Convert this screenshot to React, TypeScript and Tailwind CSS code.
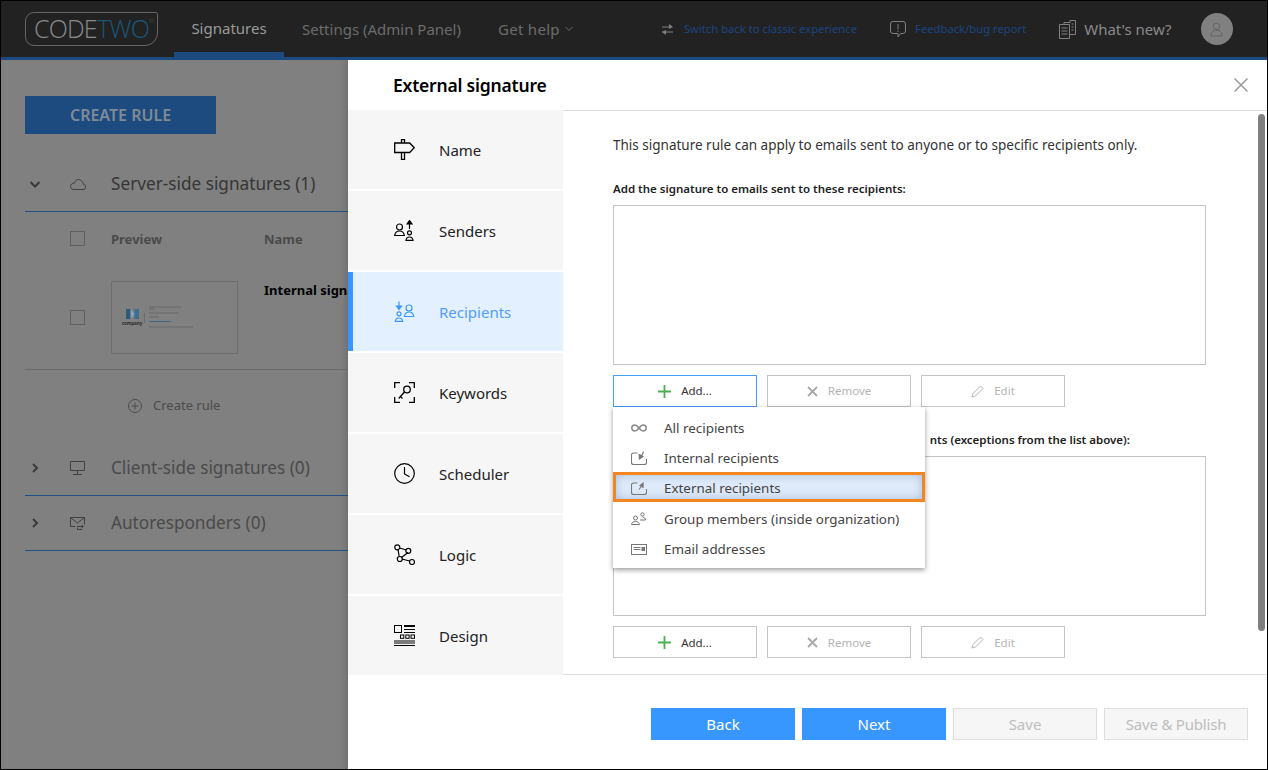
import type { ReactNode } from "react";

const Sign = () => (
  <svg width="21" height="21" viewBox="0 0 21 21" fill="none" stroke="currentColor" strokeWidth="1.3">
    <path d="M7.5 4V.7h3V4M7.5 13.5v7h3v-7M.7 4h15l4.5 4.7-4.5 4.8H.7z" />
  </svg>
);

const PeopleUp = () => (
  <svg width="21" height="21" viewBox="0 0 21 21" fill="none" stroke="currentColor" strokeWidth="1.2">
    <circle cx="5.5" cy="7" r="3" />
    <path d="M.7 15.5c.4-3 2.2-4.5 4.8-4.5s4.400 1.500 4.800 4.500z" />
    <circle cx="15.500" cy="12.800" r="2" />
    <path d="M12 20.300c.2-2.300 1.500-3.300 3.500-3.300s3.300 1 3.500 3.300zM15.500 9V3" />
    <path d="M13 4l2.500-3.500L18 4z" fill="currentColor" />
  </svg>
);

const PeopleDown = () => (
  <svg width="21" height="21" viewBox="0 0 21 21" fill="none" stroke="currentColor" strokeWidth="1.2">
    <circle cx="15" cy="7" r="3" />
    <path d="M10.500 15.500c.4-3 2.200-4.500 4.500-4.500s4.400 1.500 4.800 4.500z" />
    <circle cx="5" cy="12.800" r="2" />
    <path d="M1.300 20.300c.2-2.300 1.600-3.300 3.700-3.300s3.400 1 3.700 3.300zM5 .5v5" />
    <path d="M2.500 5L5 8.500 7.500 5z" fill="currentColor" />
  </svg>
);

const KeyIcon = () => (
  <svg width="21" height="21" viewBox="0 0 21 21" fill="none" stroke="currentColor" strokeWidth="1.3">
    <path d="M.7 6V.7H6M15 .7h5.300V6M.7 15v5.300H6M15 20.300h5.300V15" />
    <circle cx="13" cy="7.500" r="3.300" />
    <path d="M10.500 10l-5.800 6.500M6.500 14.500l2 2" />
  </svg>
);

const ClockIcon = () => (
  <svg width="21" height="21" viewBox="0 0 21 21" fill="none" stroke="currentColor" strokeWidth="1.2">
    <circle cx="10.500" cy="10.500" r="9.800" />
    <path d="M10.500 4v7l5 2.800" />
  </svg>
);

const LogicIcon = () => (
  <svg width="21" height="21" viewBox="0 0 21 21" fill="none" stroke="currentColor" strokeWidth="1.2">
    <path d="M5.500 4l7 2M4 5.500l1.200 7M14 8.500l-6.500 5M8 15l7.500 2" />
    <circle cx="3.300" cy="3.300" r="2.500" />
    <circle cx="14.300" cy="6.800" r="2.500" />
    <circle cx="5.800" cy="15" r="2.500" />
    <circle cx="18" cy="18" r="2.500" />
  </svg>
);

const DesignIcon = () => (
  <svg width="21" height="21" viewBox="0 0 21 21" fill="none" stroke="currentColor" strokeWidth="1">
    <rect x=".5" y=".5" width="7" height="7" />
    <path d="M10 1h11" strokeWidth="2" />
    <path d="M10 4.500h11M10 7.500h11" />
    <rect x="6.500" y="10" width="3.300" height="3.300" />
    <rect x="11.800" y="10" width="3.300" height="3.300" />
    <rect x="17" y="10" width="3.500" height="3.300" />
    <path d="M0 16h21M0 20.500h21M0 18h21" />
  </svg>
);

const InfinityIcon = () => (
  <svg width="16" height="8" viewBox="0 0 16 8" fill="none" stroke="#888888" strokeWidth="1.500">
    <path d="M8 4C6.500 2 5.500 1 3.800 1a3 3 0 000 6C5.500 7 6.500 6 8 4zm0 0c1.500-2 2.500-3 4.200-3a3 3 0 010 6C10.500 7 9.500 6 8 4z" />
  </svg>
);

const BoxArrow = ({ out }: { out?: boolean }) => (
  <svg width="16" height="14" viewBox="0 0 16 14" fill="none" stroke="currentColor" strokeWidth="1.100">
    <path d="M6.500 2H2.500a2 2 0 00-2 2v7.500a2 2 0 002 2h11a2 2 0 002-2V8" />
    {out ? (
      <>
        <path d="M8 8.500l3-4" />
        <path d="M12.800 1L8 4.500l4.500 2.800z" fill="currentColor" stroke="none" />
      </>
    ) : (
      <>
        <path d="M12.500.5l-2 5" />
        <path d="M7.500 2.500L8 9l5-3.500z" fill="currentColor" stroke="none" />
      </>
    )}
  </svg>
);

const GroupIcon = () => (
  <svg width="15" height="13" viewBox="0 0 15 13" fill="none" stroke="currentColor" strokeWidth="1">
    <circle cx="4.500" cy="6" r="2" />
    <path d="M.5 12.500c.3-2 1.700-3 4-3s3.700 1 4 3z" />
    <circle cx="11.500" cy="2.500" r="1.700" />
    <path d="M9 8h5.500c-.2-1.800-1.200-2.700-2.800-2.700" />
  </svg>
);

const CardIcon = () => (
  <svg width="16" height="11" viewBox="0 0 16 11" fill="none" stroke="currentColor" strokeWidth="1">
    <rect x=".5" y=".5" width="15" height="10" />
    <path d="M2.500 3.500h7M2.500 5.500h7" />
    <rect x="11" y="3.500" width="2.500" height="3" fill="currentColor" />
  </svg>
);

const navItems: { label: string; icon: ReactNode; active?: boolean }[] = [
  { label: "Name", icon: <Sign /> },
  { label: "Senders", icon: <PeopleUp /> },
  { label: "Recipients", icon: <PeopleDown />, active: true },
  { label: "Keywords", icon: <KeyIcon /> },
  { label: "Scheduler", icon: <ClockIcon /> },
  { label: "Logic", icon: <LogicIcon /> },
  { label: "Design", icon: <DesignIcon /> },
];

function NavItem({ label, icon, active }: { label: string; icon: ReactNode; active?: boolean }) {
  return (
    <div
      className={
        active
          ? "flex h-[79px] items-center gap-[24px] border-l-[5px] border-[#3897ff] bg-[#e3f0ff] pl-[41px] text-[#4f9eff]"
          : "flex h-[79px] items-center gap-[24px] bg-[#f6f6f6] pl-[46px] text-[#222]"
      }
    >
      <span className={active ? "text-[#3897ff]" : "text-black"}>{icon}</span>
      <span className="pt-[2px] text-[15px]">{label}</span>
    </div>
  );
}

function ActionButtons({ active }: { active?: boolean }) {
  return (
    <div className="mt-[10px] flex gap-[10px]">
      <div
        className={
          active
            ? "flex h-[32px] w-[144px] items-center justify-center gap-[10px] border border-[#4a9ff5] pt-[1px] text-[11.500px] text-[#333]"
            : "flex h-[32px] w-[144px] items-center justify-center gap-[10px] border border-[#c4c4c4] pt-[1px] text-[11.500px] text-[#333]"
        }
      >
        <svg width="13" height="13" viewBox="0 0 13 13" stroke="#4caf50" strokeWidth="1.800">
          <path d="M6.500 0v13M0 6.500h13" />
        </svg>
        Add...
      </div>
      <div className="flex h-[32px] w-[144px] items-center justify-center gap-[10px] border border-[#c4c4c4] pt-[1px] text-[11.500px] text-[#b4b4b4]">
        <svg width="11" height="11" viewBox="0 0 11 11" stroke="#a8a8a8" strokeWidth="1.800">
          <path d="M1 1l9 9M10 1l-9 9" />
        </svg>
        Remove
      </div>
      <div className="flex h-[32px] w-[144px] items-center justify-center gap-[10px] border border-[#c4c4c4] pt-[1px] text-[11.500px] text-[#b4b4b4]">
        <svg width="13" height="13" viewBox="0 0 13 13" fill="none" stroke="#b4b4b4" strokeWidth="1">
          <path d="M1 12l1-3.500L9.500 1l2.500 2.500L4.500 11z" />
        </svg>
        Edit
      </div>
    </div>
  );
}

function MenuRow({ icon, label, selected }: { icon: ReactNode; label: string; selected?: boolean }) {
  return (
    <div
      className={
        selected
          ? "relative -mt-[2px] mb-[2px] flex h-[30.250px] items-center border-[3px] border-[#f5861f] bg-[#dfebfa] pl-[15px] pt-[2px] text-[13.400px] text-[#444] shadow-[inset_0_0_10px_rgba(120,150,190,0.55)]"
          : "flex h-[30.250px] items-center pl-[18px] text-[13.400px] text-[#444]"
      }
    >
      <span className="flex w-[33px] text-[#777]">{icon}</span>
      {label}
    </div>
  );
}

function Section({ icon, label, open, dark }: { icon: ReactNode; label: string; open?: boolean; dark?: boolean }) {
  return (
    <div className="flex h-[55px] items-center border-b border-[#1f4f85] pl-[5px]">
      <svg width="10" height="10" viewBox="0 0 10 10" fill="none" stroke="#3a3a3a" strokeWidth="2">
        <path d={open ? "M.5 3l4.500 4.500L9.500 3" : "M3 1l4 4-4 4"} />
      </svg>
      <span className="ml-[30px] flex w-[41px] text-[#404040]">{icon}</span>
      <span className={dark ? "text-[17.200px] text-[#363636]" : "text-[17.200px] text-[#4a4a4a]"}>{label}</span>
    </div>
  );
}

export default function App() {
  return (
    <div className="flex h-[770px] w-[1268px] flex-col overflow-hidden border border-black bg-[#808080] font-['Noto_Sans','Open_Sans',sans-serif]">
      <header className="flex h-[59px] shrink-0 items-stretch border-b-[3px] border-[#1d4b80] bg-[#222222]">
        <div className="relative ml-[24px] mt-[11px] flex h-[34px] w-[133px] items-center justify-center rounded-bl-[9px] rounded-tl-[9px] rounded-br-[13px] rounded-tr-[2px] border border-[#666666] text-[25px] font-light tracking-[-0.8px] font-['Open_Sans',sans-serif]">
          <span className="text-[#8a8a8a]">CODE</span>
          <span className="text-[#1a5778]">TWO</span>
          <span className="absolute right-[4px] top-[5px] text-[6px] leading-none text-[#5f5f5f]">®</span>
        </div>
        <div className="relative ml-[16px] flex w-[110px] items-center justify-center pb-[1px] text-[15px] text-[#9a9a9a]">
          Signatures
          <span className="absolute bottom-0 left-0 right-0 h-[5px] bg-[#1d4b80]" />
        </div>
        <div className="ml-[18px] flex items-center text-[15px] text-[#6c6c6c]">Settings (Admin Panel)</div>
        <div className="ml-[37px] flex items-center gap-[5px] text-[15px] tracking-[0.3px] text-[#6c6c6c]">
          Get help
          <svg width="8" height="6" viewBox="0 0 8 6" fill="none" stroke="#6c6c6c" strokeWidth="1">
            <path d="M.5 1L4 4.500 7.500 1" />
          </svg>
        </div>
        <div className="ml-[89px] flex items-center text-[11.250px] text-[#1d4480]">
          <svg className="mr-[11px]" width="11" height="11" viewBox="0 0 11 11" fill="none" stroke="#808080" strokeWidth="1.200">
            <path d="M0 3h9M0 8h11" />
            <path d="M7 0l4 3-4 2zM4 6L0 8l4 3z" fill="#808080" stroke="none" />
          </svg>
          Switch back to classic experience
        </div>
        <div className="ml-[33px] flex items-center text-[11.250px] text-[#1d4480]">
          <svg className="mr-[9px]" width="16" height="17" viewBox="0 0 16 17" fill="none" stroke="#808080" strokeWidth="1">
            <path d="M3 .5h10a2.500 2.500 0 012.500 2.500v7a2.500 2.500 0 01-2.500 2.500h-2.500L8 16v-3.500H3A2.500 2.500 0 01.5 10V3A2.500 2.500 0 013 .5zM8 3v5.500M8 9.500V11" />
          </svg>
          Feedback/bug report
        </div>
        <div className="ml-[33px] flex items-center text-[15px] text-[#8a8a8a]">
          <svg className="mr-[8px]" width="17" height="19" viewBox="0 0 17 19" fill="none" stroke="#808080" strokeWidth="1">
            <path d="M.5 4.500h10v14H.5zM5 4.500v-2h6v-2h5.500v14h-6M2.500 8h6M2.500 11h6M2.500 14h6M12.500 4h2M12.500 7h2M12.500 10h2" />
          </svg>
          What&apos;s new?
        </div>
        <div className="ml-[29px] mt-[12px] flex h-[32px] w-[32px] items-center justify-center rounded-full bg-[#808080]">
          <svg width="13" height="15" viewBox="0 0 16 18" fill="none" stroke="#5f5f5f" strokeWidth="1.100">
            <circle cx="8" cy="5" r="4" />
            <path d="M1 17c.4-4 2-6 4.500-7h5c2.500 1 4.100 3 4.500 7z" />
          </svg>
        </div>
      </header>

      <div className="flex min-h-0 flex-1">
        <main className="w-[347px] shrink-0 overflow-hidden bg-[#808080] pl-[24px] pt-[36px] shadow-[inset_-8px_0_8px_-8px_rgba(0,0,0,0.25)]">
          <div className="flex h-[38px] w-[191px] items-center justify-center bg-[#1d4b80] text-[16px] font-semibold text-[#7f8a96]">
            CREATE RULE
          </div>
          <div className="mt-[23px] w-[340px]">
            <Section
              open
              dark
              label="Server-side signatures (1)"
              icon={
                <svg width="16" height="11" viewBox="0 0 16 11" fill="none" stroke="currentColor" strokeWidth="1">
                  <path d="M4 10.500h9a2.500 2.500 0 00.500-5C13 2.500 11 .5 8.500.5 6.500.5 5 2 4.500 4 2 4 .5 5.500.5 7.500s1.500 3 3.500 3z" />
                </svg>
              }
            />
            <div className="flex h-[55px] items-center pl-[45px] text-[13px] font-bold text-[#4a4a4a]">
              <span className="-mt-[2px] h-[15px] w-[15px] shrink-0 border border-[#5f5f5f]" />
              <span className="ml-[26px] w-[153px] shrink-0">Preview</span>
              <span>Name</span>
            </div>
            <div className="flex h-[103px] items-start border-b border-[#6a6a6a] pl-[45px] pt-[14px]">
              <span className="mt-[29px] h-[15px] w-[15px] shrink-0 border border-[#5f5f5f]" />
              <div className="ml-[26px] flex h-[73px] w-[127px] shrink-0 items-center border border-[#6e6e6e] pl-[11px]">
                <div className="flex w-[18px] flex-col items-center">
                  <svg width="13" height="12" viewBox="0 0 14 13">
                    <path d="M0 1h5v11H0z" fill="#2f5a75" />
                    <path d="M9 1h5v11H9z" fill="#3d7090" />
                    <path d="M5 1l4 5.500L5 12z" fill="#85a6bb" />
                  </svg>
                  <span className="text-[4.500px] font-bold leading-[7px] text-[#2a2a2a]">company</span>
                </div>
                <span className="ml-[3px] h-[10px] w-px bg-[#6a6a6a]" />
                <svg className="ml-[4px]" width="46" height="24" viewBox="0 0 46 24" stroke="#4c4c4c" strokeWidth="1">
                  <path d="M0 1h32M0 3h6M0 7h30M0 11h10M0 21h44" strokeOpacity="0.45" />
                  <path d="M0 15.500h22" stroke="#2e5f8a" strokeOpacity="0.8" />
                </svg>
              </div>
              <span className="ml-[26px] whitespace-nowrap text-[13px] font-bold text-black">Internal signature</span>
            </div>
            <div className="flex h-[71px] items-center pl-[103px] pt-[1px] text-[13px] text-[#4c4c4c]">
              <svg className="mr-[11px]" width="14" height="14" viewBox="0 0 14 14" fill="none" stroke="#4c4c4c" strokeWidth="1">
                <circle cx="7" cy="7" r="6.500" />
                <path d="M7 3.500v7M3.500 7h7" />
              </svg>
              Create rule
            </div>
            <Section
              label="Client-side signatures (0)"
              icon={
                <svg width="15" height="14" viewBox="0 0 15 14" fill="none" stroke="currentColor" strokeWidth="1">
                  <path d="M.5.500h14v9H.5zM7.500 9.500v4M3 13.500h9" />
                </svg>
              }
            />
            <Section
              label="Autoresponders (0)"
              icon={
                <svg width="15" height="13" viewBox="0 0 15 13" fill="none" stroke="currentColor" strokeWidth="1">
                  <path d="M5 9.500H.5v-9h14v7M.5.500l7 5.500 7-5.500M12 12.500H7.500V10.500M7 9.500h6M11.500 8l2 1.500-2 1.500" />
                </svg>
              }
            />
          </div>
        </main>

        <section className="flex min-w-0 flex-1 flex-col bg-white">
          <div className="flex h-[50px] shrink-0 items-center justify-between pl-[45px] pr-[19px]">
            <h1 className="text-[17.500px] font-semibold tracking-[-0.2px] text-black">External signature</h1>
            <svg width="14" height="14" viewBox="0 0 14 14" stroke="#9a9a9a" strokeWidth="1.500">
              <path d="M.5.500l13 13M13.500.500l-13 13" />
            </svg>
          </div>
          <div className="flex min-h-0 flex-1">
            <nav className="flex w-[215px] shrink-0 flex-col gap-[2px] bg-white">
              {navItems.map((item) => (
                <NavItem key={item.label} {...item} />
              ))}
            </nav>
            <div className="relative flex-1 border-b border-t border-[#dddddd] pl-[50px] pt-[24px]">
              <p className="text-[13.500px] text-[#333]">
                This signature rule can apply to emails sent to anyone or to specific recipients only.
              </p>
              <p className="mt-[25px] text-[11.500px] font-semibold text-[#222]">
                Add the signature to emails sent to these recipients:
              </p>
              <div className="mt-[7px] h-[160px] w-[593px] border border-[#c4c4c4]" />
              <ActionButtons active />
              <p className="mt-[24px] w-[517px] whitespace-nowrap text-right text-[11.500px] font-semibold text-[#222]">
                nts (exceptions from the list above):
              </p>
              <div className="mt-[8px] h-[160px] w-[593px] border border-[#c4c4c4]" />
              <ActionButtons />

              <div className="absolute left-[50px] top-[296px] w-[312px] bg-white pb-[4px] pt-[6px] shadow-[0_2px_5px_rgba(0,0,0,0.4)]">
                <MenuRow icon={<InfinityIcon />} label="All recipients" />
                <MenuRow icon={<BoxArrow />} label="Internal recipients" />
                <MenuRow icon={<BoxArrow out />} label="External recipients" selected />
                <MenuRow icon={<GroupIcon />} label="Group members (inside organization)" />
                <MenuRow icon={<CardIcon />} label="Email addresses" />
              </div>
              <div className="absolute right-[2px] top-[3px] h-[517px] w-[7px] rounded-full bg-[#808080]" />
            </div>
          </div>
          <div className="flex h-[94px] shrink-0 items-start justify-end gap-[7px] pr-[19px] pt-[33px]">
            <div className="flex h-[32px] w-[144px] items-center justify-center bg-[#3897ff] text-[15px] text-white">Back</div>
            <div className="flex h-[32px] w-[144px] items-center justify-center bg-[#3897ff] text-[15px] text-white">Next</div>
            <div className="flex h-[32px] w-[144px] items-center justify-center border border-[#dddddd] bg-[#f6f6f6] text-[15px] text-[#bdbdbd]">Save</div>
            <div className="flex h-[32px] w-[144px] items-center justify-center border border-[#dddddd] bg-[#f6f6f6] text-[15px] tracking-[-0.2px] text-[#bdbdbd]">Save &amp; Publish</div>
          </div>
        </section>
      </div>
    </div>
  );
}
